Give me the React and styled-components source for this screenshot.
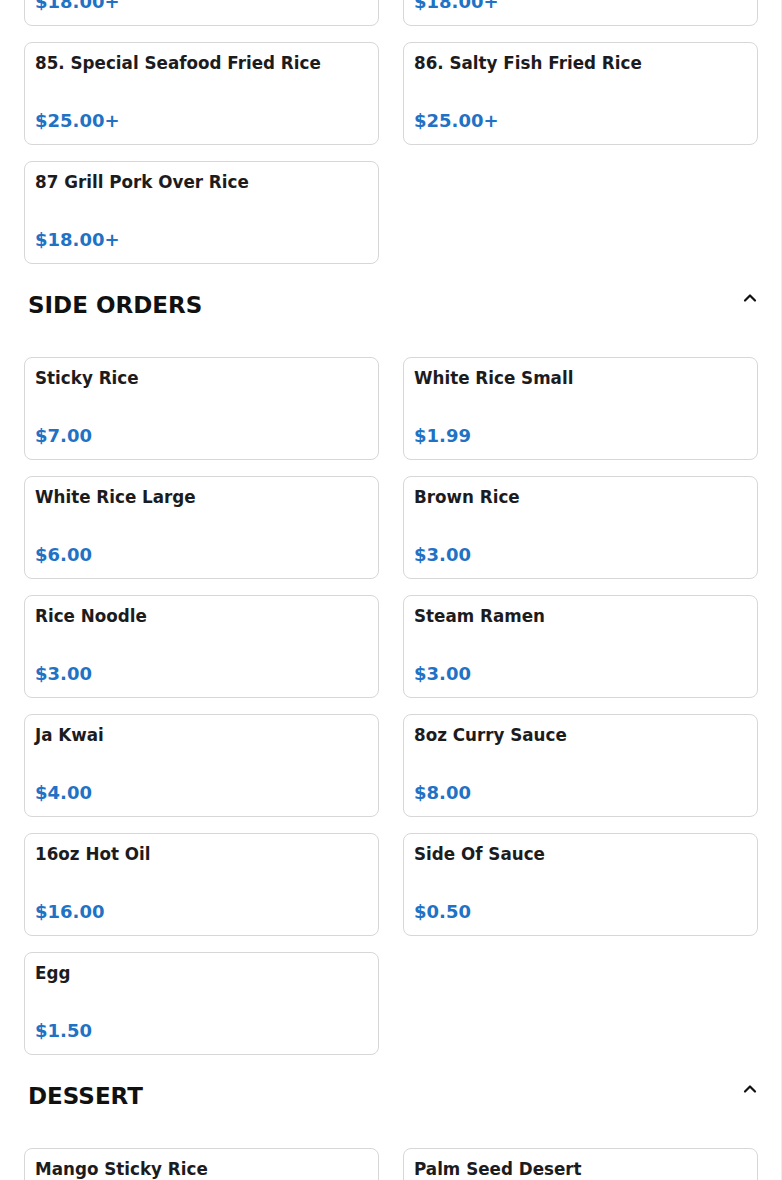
import React from "react";
import styled, { createGlobalStyle } from "styled-components";

const GlobalStyle = createGlobalStyle`
  html, body { margin: 0; padding: 0; background: #ffffff; }
  body { font-family: "DejaVu Sans", "Liberation Sans", sans-serif; overflow: hidden; }
  * { box-sizing: border-box; }
`;

const Page = styled.div`
  width: 782px;
  min-height: 1180px;
  border-right: 1px solid #ececec;
  padding: 0 23px 0 24px;
`;

const Scroller = styled.div`
  margin-top: -77px;
`;

const Section = styled.section`
  display: flex;
  flex-direction: column;
`;

const SectionHeader = styled.div`
  display: flex;
  justify-content: space-between;
  align-items: flex-start;
  padding: 0 0 0 4px;
  margin: 27px 0 38px;
`;

const SectionTitle = styled.h2`
  margin: 0;
  font-size: 23px;
  line-height: 28px;
  font-weight: 700;
  color: #111111;
  text-transform: uppercase;
`;

const Toggle = styled.button`
  border: 0;
  background: none;
  padding: 0;
  width: 16px;
  height: 14px;
  display: flex;
  align-items: center;
  justify-content: center;
  color: #111;
  cursor: pointer;
`;

const Grid = styled.div`
  display: grid;
  grid-template-columns: 1fr 1fr;
  column-gap: 24px;
  row-gap: 16px;
`;

const Card = styled.div`
  height: 103px;
  border: 1px solid #d7d7d7;
  border-radius: 8px;
  background: #fff;
  padding: 8px 10px 10px;
  display: flex;
  flex-direction: column;
  justify-content: space-between;
`;

const ItemName = styled.div`
  font-size: 16.75px;
  line-height: 24px;
  font-weight: 700;
  color: #1c1c1e;
`;

const Price = styled.div`
  font-size: 18px;
  line-height: 27px;
  font-weight: 700;
  color: #1f72c4;
`;

const ChevronUp = () => (
  <svg width="16" height="14" viewBox="0 0 16 14" fill="none">
    <path d="M3 9.5 L8 4.5 L13 9.5" stroke="currentColor" strokeWidth="2.2" strokeLinecap="round" strokeLinejoin="round" />
  </svg>
);

const Item = ({ name, price }) => (
  <Card>
    <ItemName>{name}</ItemName>
    <Price>{price}</Price>
  </Card>
);

const rice = [
  ["83. Pineapple Fried Rice", "$18.00+"],
  ["84. Basil Fried Rice", "$18.00+"],
  ["85. Special Seafood Fried Rice", "$25.00+"],
  ["86. Salty Fish Fried Rice", "$25.00+"],
  ["87 Grill Pork Over Rice", "$18.00+"],
];

const sides = [
  ["Sticky Rice", "$7.00"],
  ["White Rice Small", "$1.99"],
  ["White Rice Large", "$6.00"],
  ["Brown Rice", "$3.00"],
  ["Rice Noodle", "$3.00"],
  ["Steam Ramen", "$3.00"],
  ["Ja Kwai", "$4.00"],
  ["8oz Curry Sauce", "$8.00"],
  ["16oz Hot Oil", "$16.00"],
  ["Side Of Sauce", "$0.50"],
  ["Egg", "$1.50"],
];

const desserts = [
  ["Mango Sticky Rice", "$8.00"],
  ["Palm Seed Desert", "$6.00"],
];

const MenuSection = ({ title, items }) => (
  <Section>
    {title && (
      <SectionHeader>
        <SectionTitle>{title}</SectionTitle>
        <Toggle aria-label="Collapse">
          <ChevronUp />
        </Toggle>
      </SectionHeader>
    )}
    <Grid>
      {items.map(([n, p]) => (
        <Item key={n} name={n} price={p} />
      ))}
    </Grid>
  </Section>
);

export default function App() {
  return (
    <>
      <GlobalStyle />
      <Page>
        <Scroller>
          <MenuSection items={rice} />
          <MenuSection title="Side Orders" items={sides} />
          <MenuSection title="Dessert" items={desserts} />
        </Scroller>
      </Page>
    </>
  );
}
